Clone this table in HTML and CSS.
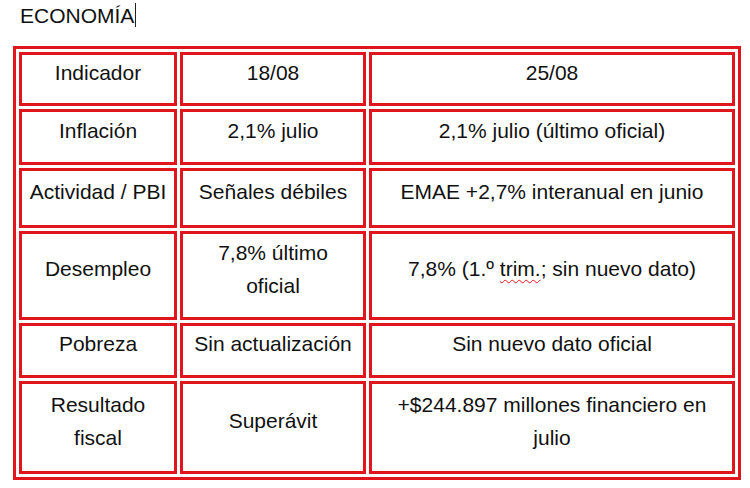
FILE: index.html
```html
<!DOCTYPE html>
<html lang="es">
<head>
<meta charset="utf-8">
<title>Economía</title>
<link rel="stylesheet" href="styles.css">
</head>
<body>
<div class="title">ECONOMÍA<span class="cursor"></span></div>
<table class="grid">
  <tr class="r1">
    <td class="c1">Indicador</td>
    <td class="c2">18/08</td>
    <td class="c3">25/08</td>
  </tr>
  <tr class="r2">
    <td>Inflación</td>
    <td>2,1% julio</td>
    <td>2,1% julio (último oficial)</td>
  </tr>
  <tr class="r3">
    <td>Actividad / PBI</td>
    <td>Señales débiles</td>
    <td>EMAE +2,7% interanual en junio</td>
  </tr>
  <tr class="r4">
    <td>Desempleo</td>
    <td>7,8% último oficial</td>
    <td>7,8% (1.º <span class="spell">trim.</span>; sin nuevo dato)</td>
  </tr>
  <tr class="r5">
    <td>Pobreza</td>
    <td>Sin actualización</td>
    <td>Sin nuevo dato oficial</td>
  </tr>
  <tr class="r6">
    <td>Resultado fiscal</td>
    <td>Superávit</td>
    <td>+$244.897 millones financiero en julio</td>
  </tr>
</table>
</body>
</html>
```

FILE: styles.css
```css
html, body {
  margin: 0;
  padding: 0;
  background: #ffffff;
}

body {
  font-family: "Liberation Sans", Arial, sans-serif;
  font-size: 21px;
  color: #111111;
}

.title {
  padding: 3px 0 0 20px;
  line-height: 24px;
  height: 24px;
}

.cursor {
  display: inline-block;
  width: 1px;
  height: 24px;
  background: #222;
  margin-left: 1px;
  vertical-align: -4px;
}

.grid {
  margin: 19px 0 0 13px;
  width: 728px;
  table-layout: fixed;
  border-collapse: separate;
  border-spacing: 3px;
  border: 3px solid #e0161c;
}

.grid td {
  box-sizing: border-box;
  border: 3px solid #e0161c;
  padding: 0 7px 14px;
  text-align: center;
  vertical-align: middle;
  line-height: 33px;
}

.grid .c1 { width: 158px; }
.grid .c2 { width: 186px; }
.grid .c3 { width: 366px; }

.r1 td { height: 54px; }
.r2 td { height: 56px; }
.r3 td { height: 60px; }
.r4 td { height: 89px; }
.r5 td { height: 55px; }
.r6 td { height: 93px; }

.spell {
  text-decoration: underline wavy #e0161c;
  text-decoration-thickness: 1px;
  text-underline-offset: 3px;
}
```
